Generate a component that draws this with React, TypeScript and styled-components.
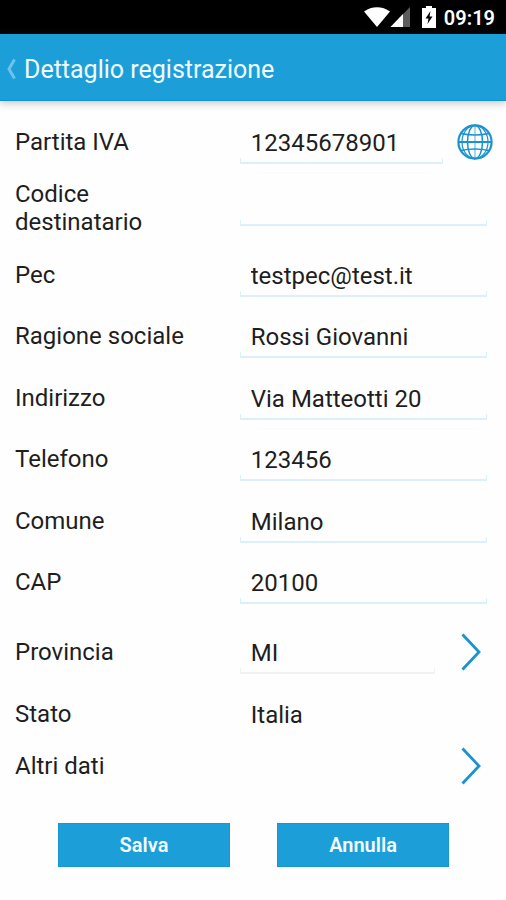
import React from "react";
import styled, { createGlobalStyle, css } from "styled-components";

const BLUE = "#1c9fd9";
const LINE = "#dcf0fb";

const GlobalStyle = createGlobalStyle`
  *, *::before, *::after { box-sizing: border-box; }
  body {
    margin: 0;
    background: #fefefe;
    color: #1e1e1e;
    font-family: Roboto, "Liberation Sans", sans-serif;
  }
  button, input { font: inherit; color: inherit; }
`;

const Screen = styled.div`
  display: flex;
  flex-direction: column;
  min-height: 100vh;
`;

const StatusBar = styled.div`
  display: flex;
  align-items: center;
  justify-content: flex-end;
  height: 34px;
  padding-right: 11px;
  background: #000;
  color: #fff;
`;

const Clock = styled.time`
  margin-left: 8px;
  padding-top: 2px;
  font-size: 20px;
  font-weight: 600;
  line-height: 32px;
`;

const BatterySvg = styled.svg`
  margin-left: 11px;
`;

const AppBar = styled.header`
  position: relative;
  display: flex;
  align-items: center;
  height: 67px;
  padding: 3px 0 0 6px;
  background: ${BLUE};
  border-bottom: 1px solid #0c93d2;
  box-shadow: 0 1px 8px 1px rgba(60, 50, 40, 0.28);
`;

const BackButton = styled.button`
  display: flex;
  width: 18px;
  padding: 0;
  border: 0;
  background: none;
`;

const Title = styled.h1`
  margin: 0;
  padding-top: 2px;
  color: #f2fbff;
  font-size: 25px;
  font-weight: 400;
  line-height: 32px;
`;

const Form = styled.form`
  flex: 1;
  display: flex;
  flex-direction: column;
  padding: 10px 0 33px;
`;

type Size = "fluid" | "first" | "double" | "picker" | "plain" | "link";

const rowSizes: Record<Size, string> = {
  fluid: "1 0 52px",
  first: "0 0 61px",
  double: "0 0 72px",
  picker: "0 0 77px",
  plain: "0 0 48px",
  link: "0 0 56px",
};

const Row = styled.div<{ $size: Size }>`
  flex: ${(p) => rowSizes[p.$size]};
  display: grid;
  grid-template-columns: minmax(0, 10fr) minmax(0, 11fr);
  align-items: center;
  padding: 0 19px 0 15px;
  font-size: 24px;
  line-height: 28px;
`;

const Label = styled.label`
  padding-right: 48px;
`;

const Field = styled.div<{ $raised?: boolean }>`
  display: flex;
  align-items: center;
  min-width: 0;
  ${(p) =>
    p.$raised &&
    css`
      padding-bottom: 8px;
    `}
`;

const TextInput = styled.input<{ $faint?: boolean }>`
  --line: ${(p) => (p.$faint ? "#f1f1f1" : LINE)};
  flex: 1;
  min-width: 0;
  width: 100%;
  height: 44px;
  padding: 2px 11px 0;
  border: 0;
  border-radius: 0;
  outline: 0;
  background:
    linear-gradient(var(--line), var(--line)) bottom / 100% 2px no-repeat,
    linear-gradient(var(--line), var(--line)) left bottom / 1px 6px no-repeat,
    linear-gradient(var(--line), var(--line)) right bottom / 1px 6px no-repeat;
`;

const Value = styled.output`
  padding: 2px 11px 0;
`;

const IconButton = styled.button<{ $edge?: boolean }>`
  flex: none;
  display: flex;
  align-items: center;
  justify-content: center;
  width: ${(p) => (p.$edge ? 36 : 32)}px;
  height: 42px;
  margin-left: ${(p) => (p.$edge ? 14 : 20)}px;
  margin-right: ${(p) => (p.$edge ? -6 : 0)}px;
  padding: 0;
  border: 0;
  background: none;
`;

const LinkField = styled(Field)`
  justify-content: flex-end;
`;

const Actions = styled.div`
  display: grid;
  grid-template-columns: 1fr 1fr;
  gap: 47px;
  margin-top: 29px;
  padding: 0 57px 0 58px;
`;

const ActionButton = styled.button`
  height: 44px;
  padding: 0;
  border: 1px solid #1497d3;
  background: ${BLUE};
  color: #f4fbff;
  font-size: 20px;
  font-weight: 600;
`;

function WifiIcon() {
  return (
    <svg width="26" height="20" viewBox="0 0 26 20" aria-hidden="true">
      <path d="M0 4.6C7.5-1.3 18.500-1.300 26 4.600L13 20Z" fill="#fff" />
    </svg>
  );
}

function SignalIcon() {
  return (
    <svg width="21" height="20" viewBox="0 0 21 20" aria-hidden="true">
      <path d="M20 0V20H0.500Z" fill="#5c5c5c" />
      <path d="M13 7V20H0.500Z" fill="#fff" />
    </svg>
  );
}

function BatteryIcon() {
  return (
    <BatterySvg width="14" height="22" viewBox="0 0 14 22" aria-hidden="true">
      <path d="M4 0H10V2H14V22H0V2H4Z" fill="#fff" />
      <path d="M8.500 5L3.500 12.500H6.500L5.500 18L10.500 10.500H7.500Z" fill="#000" />
    </BatterySvg>
  );
}

function BackIcon() {
  return (
    <svg width="10" height="20" viewBox="0 0 10 20" fill="none" aria-hidden="true">
      <path d="M8.500 0.500L3 10L8.500 19.500" stroke="#6fc2e9" strokeWidth="3" />
    </svg>
  );
}

function GlobeIcon() {
  return (
    <svg width="36" height="36" viewBox="0 0 36 36" fill="none" stroke="#1b93cf" aria-hidden="true">
      <circle cx="18" cy="18" r="16.600" strokeWidth="2.200" />
      <ellipse cx="18" cy="18" rx="13" ry="16.600" strokeWidth="1.200" />
      <ellipse cx="18" cy="18" rx="7.500" ry="16.600" strokeWidth="1.500" />
      <path d="M1 18H35" strokeWidth="2.200" />
      <path d="M18 1V35" strokeWidth="1.200" strokeOpacity="0.6" />
      <path d="M4 9.500Q18 12.500 32 9.500M4 26.500Q18 23.500 32 26.500" strokeWidth="1.400" />
    </svg>
  );
}

function ChevronIcon() {
  return (
    <svg width="20" height="38" viewBox="0 0 20 38" fill="none" aria-hidden="true">
      <path d="M1.500 1.500L18 19L1.500 36.500" stroke="#1a93d0" strokeWidth="2.800" />
    </svg>
  );
}

const contactFields = [
  { id: "pec", label: "Pec", value: "testpec@test.it" },
  { id: "ragione", label: "Ragione sociale", value: "Rossi Giovanni" },
  { id: "indirizzo", label: "Indirizzo", value: "Via Matteotti 20" },
  { id: "telefono", label: "Telefono", value: "123456" },
  { id: "comune", label: "Comune", value: "Milano" },
  { id: "cap", label: "CAP", value: "20100" },
];

export default function App() {
  return (
    <Screen>
      <GlobalStyle />
      <StatusBar>
        <WifiIcon />
        <SignalIcon />
        <BatteryIcon />
        <Clock>09:19</Clock>
      </StatusBar>
      <AppBar>
        <BackButton type="button" aria-label="Indietro">
          <BackIcon />
        </BackButton>
        <Title>Dettaglio registrazione</Title>
      </AppBar>
      <Form onSubmit={(e) => e.preventDefault()}>
        <Row $size="first">
          <Label htmlFor="iva">Partita IVA</Label>
          <Field>
            <TextInput id="iva" defaultValue="12345678901" />
            <IconButton type="button" $edge aria-label="Cerca online">
              <GlobeIcon />
            </IconButton>
          </Field>
        </Row>
        <Row $size="double">
          <Label htmlFor="codice">Codice destinatario</Label>
          <Field $raised>
            <TextInput id="codice" defaultValue="" />
          </Field>
        </Row>
        {contactFields.map((f) => (
          <Row key={f.id} $size="fluid">
            <Label htmlFor={f.id}>{f.label}</Label>
            <Field>
              <TextInput id={f.id} defaultValue={f.value} />
            </Field>
          </Row>
        ))}
        <Row $size="picker">
          <Label htmlFor="provincia">Provincia</Label>
          <Field>
            <TextInput id="provincia" $faint defaultValue="MI" />
            <IconButton type="button" aria-label="Scegli provincia">
              <ChevronIcon />
            </IconButton>
          </Field>
        </Row>
        <Row $size="plain">
          <Label htmlFor="stato">Stato</Label>
          <Value id="stato">Italia</Value>
        </Row>
        <Row $size="link">
          <Label htmlFor="altri">Altri dati</Label>
          <LinkField>
            <IconButton id="altri" type="button">
              <ChevronIcon />
            </IconButton>
          </LinkField>
        </Row>
        <Actions>
          <ActionButton type="submit">Salva</ActionButton>
          <ActionButton type="button">Annulla</ActionButton>
        </Actions>
      </Form>
    </Screen>
  );
}
